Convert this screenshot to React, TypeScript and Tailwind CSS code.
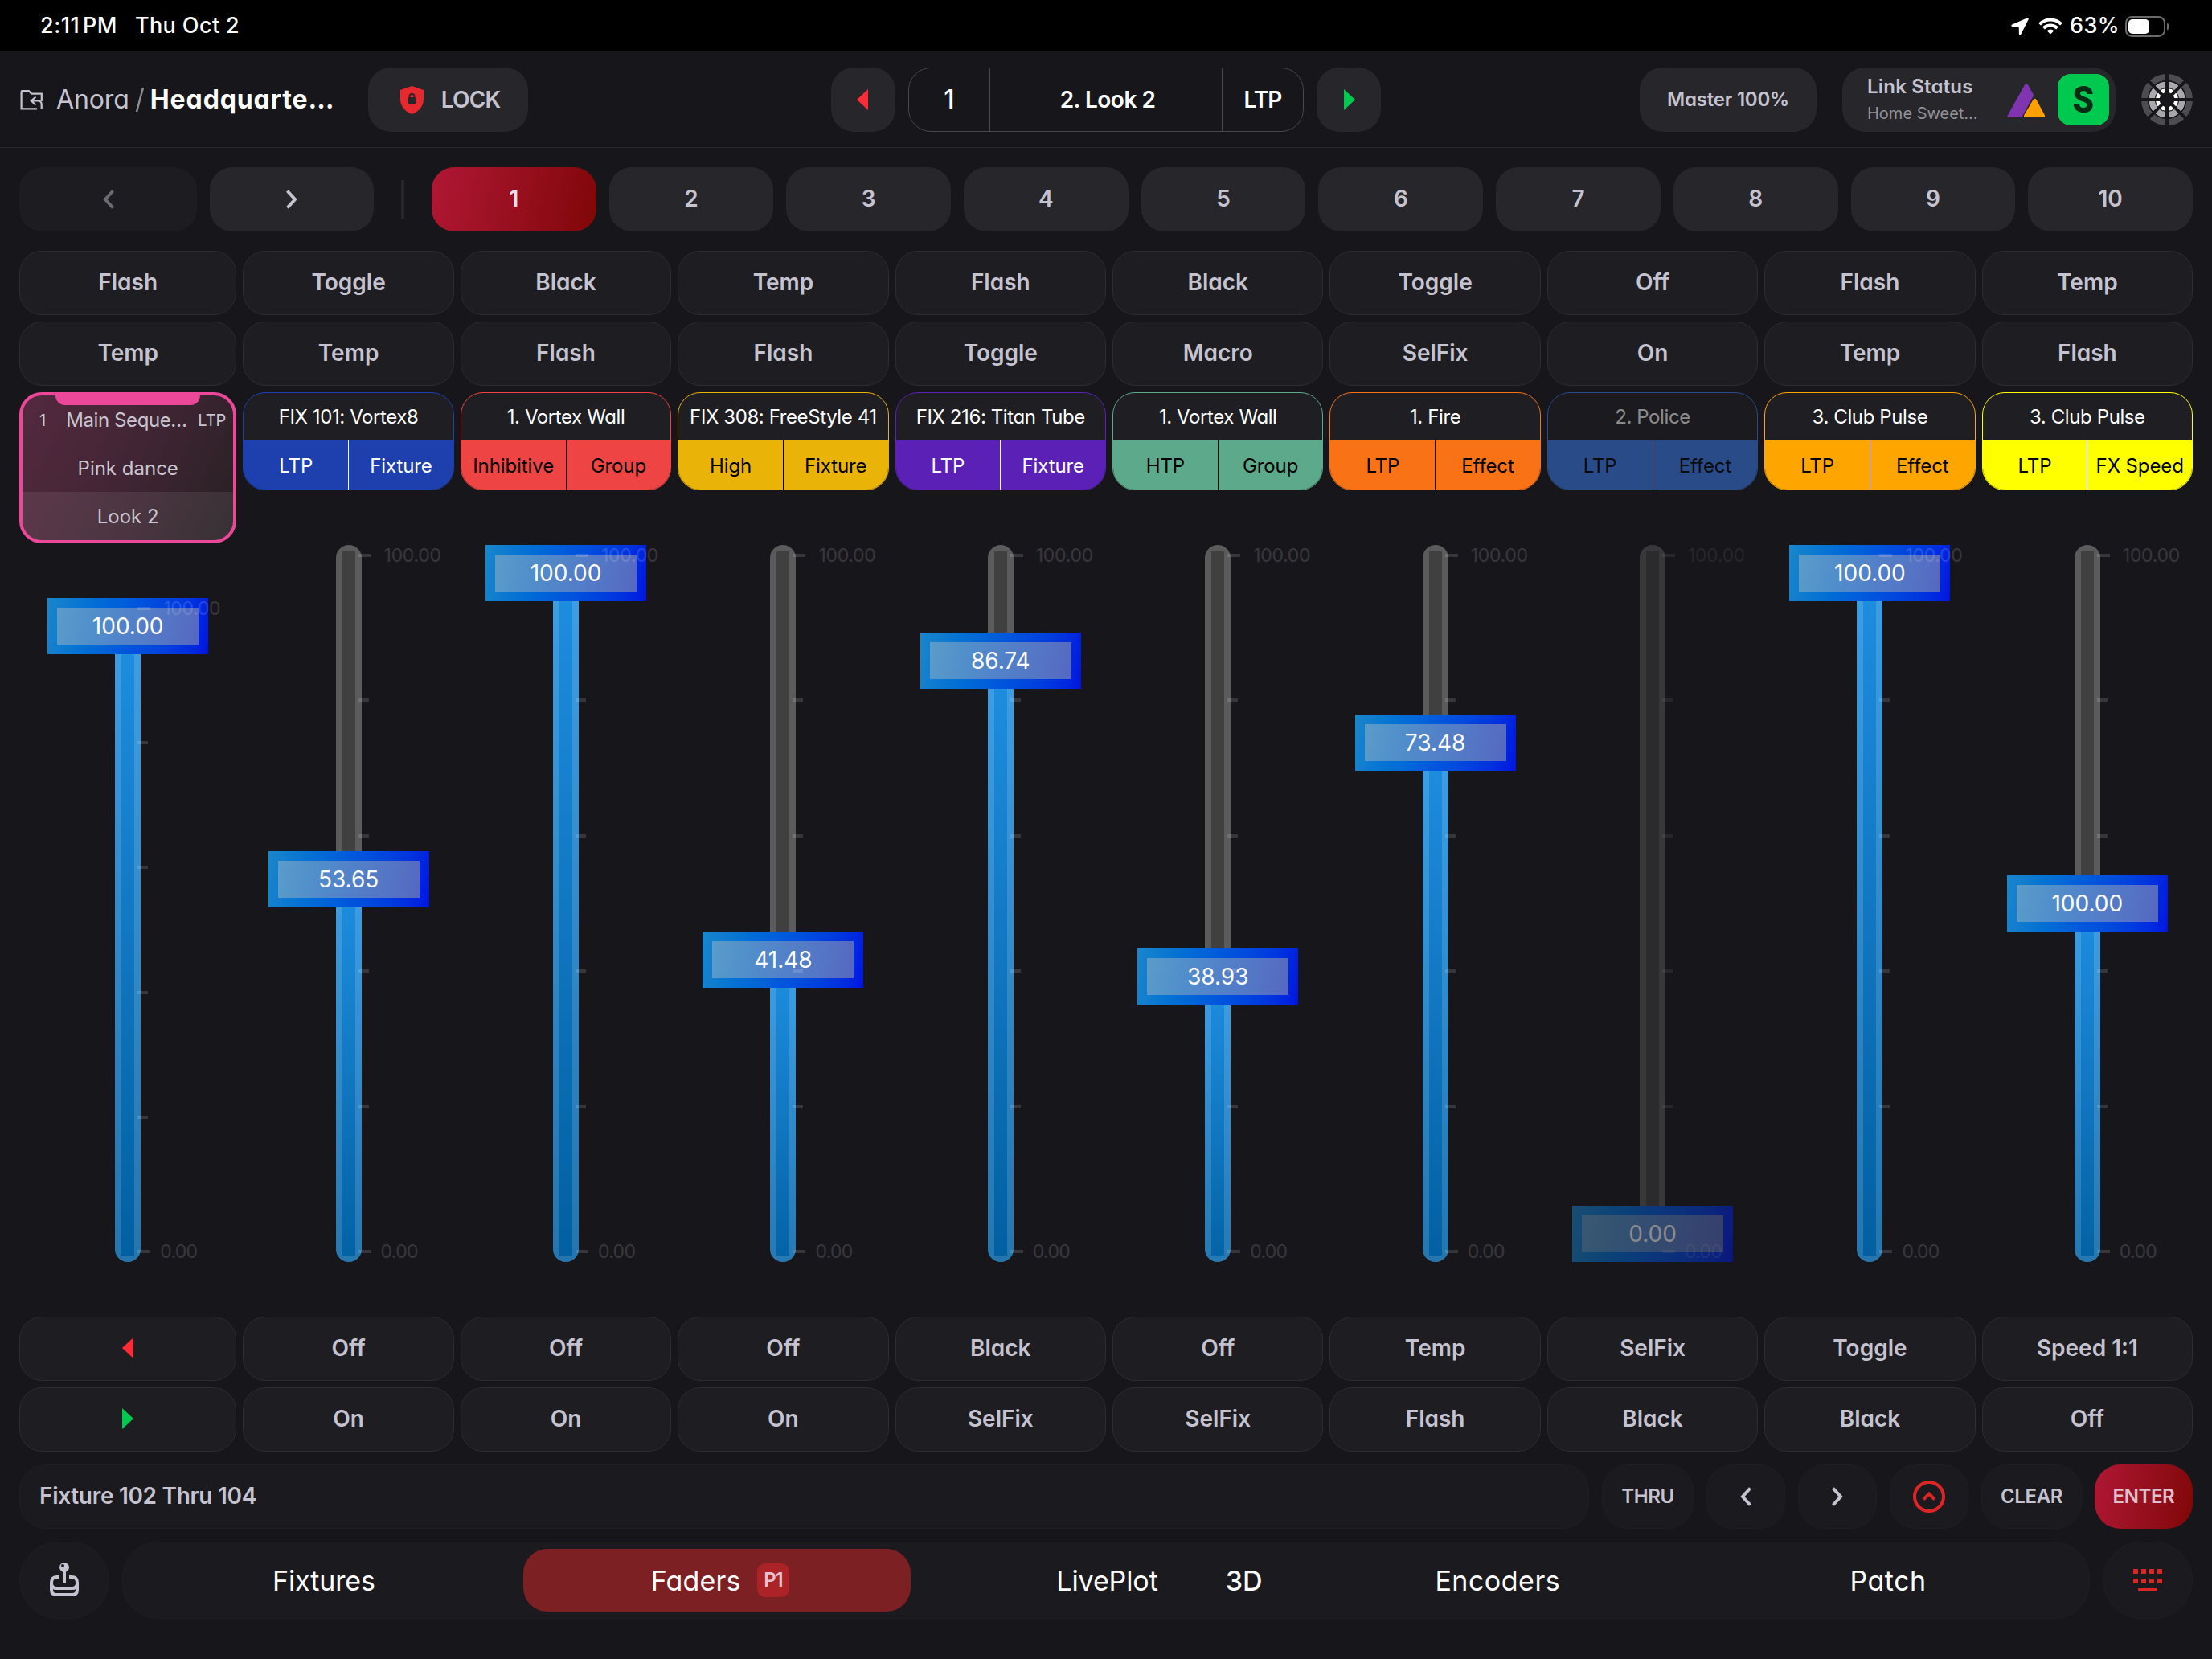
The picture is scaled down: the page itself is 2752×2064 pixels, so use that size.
import { ReactNode } from "react";
import clsx from "clsx";

interface Fader {
  top: string[];
  name: string;
  mode: string;
  kind: string;
  value: string;
  level: number;
  bottom: string[];
  border: string;
  fill: string;
  light?: boolean;
  disabled?: boolean;
}

const FADERS: Fader[] = [
  { top: ["Toggle", "Temp"], name: "FIX 101: Vortex8", mode: "LTP", kind: "Fixture", value: "53.65", level: 53.65, bottom: ["Off", "On"], border: "border-[#1e40af]", fill: "bg-[#1e40af]", light: true },
  { top: ["Black", "Flash"], name: "1. Vortex Wall", mode: "Inhibitive", kind: "Group", value: "100.00", level: 100, bottom: ["Off", "On"], border: "border-[#ef4444]", fill: "bg-[#ef4444]" },
  { top: ["Temp", "Flash"], name: "FIX 308: FreeStyle 41", mode: "High", kind: "Fixture", value: "41.48", level: 41.48, bottom: ["Off", "On"], border: "border-[#eab308]", fill: "bg-[#eab308]" },
  { top: ["Flash", "Toggle"], name: "FIX 216: Titan Tube", mode: "LTP", kind: "Fixture", value: "86.74", level: 86.74, bottom: ["Black", "SelFix"], border: "border-[#5b21b6]", fill: "bg-[#5b21b6]", light: true },
  { top: ["Black", "Macro"], name: "1. Vortex Wall", mode: "HTP", kind: "Group", value: "38.93", level: 38.93, bottom: ["Off", "SelFix"], border: "border-[#5ca98b]", fill: "bg-[#5ca98b]" },
  { top: ["Toggle", "SelFix"], name: "1. Fire", mode: "LTP", kind: "Effect", value: "73.48", level: 74.3, bottom: ["Temp", "Flash"], border: "border-[#f97316]", fill: "bg-[#f97316]" },
  { top: ["Off", "On"], name: "2. Police", mode: "LTP", kind: "Effect", value: "0.00", level: 0, bottom: ["SelFix", "Black"], border: "border-[#3b82f6]", fill: "bg-[#3b82f6]", disabled: true },
  { top: ["Flash", "Temp"], name: "3. Club Pulse", mode: "LTP", kind: "Effect", value: "100.00", level: 100, bottom: ["Toggle", "Black"], border: "border-[#ffa500]", fill: "bg-[#ffa500]" },
  { top: ["Temp", "Flash"], name: "3. Club Pulse", mode: "LTP", kind: "FX Speed", value: "100.00", level: 50, bottom: ["Speed 1:1", "Off"], border: "border-[#ffff00]", fill: "bg-[#ffff00]" },
];

const HANDLE_HEIGHT = 70;

function Triangle({ dir }: { dir: "left" | "right" }) {
  return (
    <svg width="14" height="26" viewBox="0 0 14 26">
      {dir === "left" ? (
        <path d="M14 0v26L0 13z" fill="#fb2c36" />
      ) : (
        <path d="M0 0v26l14-13z" fill="#00c950" />
      )}
    </svg>
  );
}

function Chevron({ dir }: { dir: "left" | "right" }) {
  return (
    <svg width="16" height="26" viewBox="0 0 16 26" fill="none" stroke="currentColor" strokeWidth="4">
      <path d={dir === "left" ? "M13.5 2.5 4 13l9.500 10.500" : "M2.500 2.500 12 13 2.500 23.500"} />
    </svg>
  );
}

function StatusBar() {
  return (
    <div className="flex h-16 items-center justify-between bg-black pt-px pr-[52px] pl-[50px] text-[27px] font-medium text-white">
      <div className="flex gap-[22px]">
        <span className="[word-spacing:-4px] tracking-[0.5px]">2:11 PM</span>
        <span className="tracking-[0.4px]">Thu Oct 2</span>
      </div>
      <div className="flex items-center">
        <svg width="22" height="22" viewBox="0 0 22 22" fill="#fff">
          <path d="M19.800.4 1.200 8.400c-1.300.6-1.100 2.400.3 2.500l8.200.3.2 8.800c0 1.500 1.900 1.800 2.500.5L21.600 2.200c.5-1.200-.6-2.300-1.800-1.800z" />
        </svg>
        <svg className="ml-3" width="30" height="21" viewBox="0 0 30 21" fill="none" stroke="#fff">
          <path d="M1.500 8.200a19 19 0 0 1 27 0" strokeWidth="4" />
          <path d="M6.400 13a12.200 12.200 0 0 1 17.200 0" strokeWidth="4" />
          <path d="M15 20.500 10.600 16.200a6.400 6.400 0 0 1 8.800 0z" fill="#fff" stroke="none" />
        </svg>
        <span className="ml-[9px] tracking-[0.4px]">63%</span>
        <svg className="ml-[7px]" width="56" height="26" viewBox="0 0 56 26">
          <rect x="1" y="1" width="48" height="24" rx="7.500" fill="none" stroke="#6b6b6b" strokeWidth="2" />
          <rect x="4" y="4" width="26" height="18" rx="5" fill="#fff" />
          <path d="M52 8.500c1.800.8 3 2.500 3 4.500s-1.200 3.700-3 4.500z" fill="#6b6b6b" />
        </svg>
      </div>
    </div>
  );
}

function Wheel() {
  return (
    <svg width="64" height="64" viewBox="-32 -32 64 64" fill="none">
      <circle r="28" stroke="#4d4c51" strokeWidth="8" />
      <circle r="18.800" stroke="#a9a9ab" strokeWidth="8" />
      <circle r="11.800" stroke="#fff" strokeWidth="5" />
      {[0, 45, 90, 135].map((deg) => (
        <path key={deg} d="M0-33V33" stroke="#17161b" strokeWidth="4" transform={`rotate(${deg})`} />
      ))}
      <circle r="14.700" stroke="#17161b" strokeWidth="1" />
      <circle r="23.400" stroke="#17161b" strokeWidth="1.400" />
    </svg>
  );
}

function Header() {
  return (
    <header className="flex h-[120px] items-center border-b border-[#27262b] px-6 pt-px">
      <div className="flex w-[1010px] items-center">
        <svg width="30" height="26" viewBox="0 0 30 26" fill="none" stroke="#c5c3d0" strokeWidth="2.200">
          <path d="M22 24.300H2.600V3.200q0-1 1-1h8.200l3.400 3.400h12.600V15" />
          <path d="M20.500 9.500 14.800 14.500l5.700 5M15.500 14.500h7.500q4.700 0 4.700 4.500v6" />
        </svg>
        <span className="ml-4 text-[32px] tracking-[-0.1px] text-[#c5c3d0]">Anora</span>
        <svg className="ml-[7px]" width="12" height="32" viewBox="0 0 12 32" stroke="#8e8d90" strokeWidth="2.500">
          <path d="M10 1 2 31" />
        </svg>
        <span className="ml-[7px] w-[230px] text-[32px] font-bold tracking-[0.9px] whitespace-nowrap text-white">Headquarte…</span>
        <button className="ml-[41px] flex h-20 w-[199px] items-center rounded-[28px] bg-[#27262b] pl-10 text-[28px] font-semibold text-[#c5c3d0]">
          <svg width="29" height="35" viewBox="0 0 29 35">
            <path d="M14.500 0 29 5v11.500C29 25 23 32 14.500 35 6 32 0 25 0 16.500V5z" fill="#e7292f" />
            <path d="M11.500 15v-2a3 3 0 0 1 6 0v2" fill="none" stroke="#27262b" strokeWidth="1.800" />
            <rect x="9.500" y="14" width="10" height="8.500" rx="1.500" fill="#27262b" />
          </svg>
          <span className="ml-[22px] tracking-[-0.8px]">LOCK</span>
        </button>
      </div>

      <div className="flex gap-4">
        <button className="flex size-20 items-center justify-center rounded-[28px] bg-[#27262b] pr-0.5">
          <Triangle dir="left" />
        </button>
        <div className="flex h-20 w-[492px] rounded-[28px] border border-[#48474d] text-[28px] font-semibold text-white">
          <span className="flex w-[101px] items-center justify-center border-r border-[#48474d] text-[32px] font-medium">1</span>
          <span className="flex flex-1 items-center justify-center pl-1 tracking-[-0.5px]">2. Look 2</span>
          <span className="flex w-[101px] items-center justify-center border-l border-[#48474d] tracking-[-1px]">LTP</span>
        </div>
        <button className="flex size-20 items-center justify-center rounded-[28px] bg-[#27262b] pl-0.5">
          <Triangle dir="right" />
        </button>
      </div>

      <div className="ml-auto flex items-center gap-8">
        <button className="h-20 w-[220px] rounded-[28px] bg-[#27262b] text-2xl font-semibold tracking-[-0.2px] text-[#c5c3d0]">Master 100%</button>
        <div className="flex h-20 w-[340px] items-center rounded-[28px] bg-[#27262b] pr-2 pl-[31px]">
          <div className="flex flex-col">
            <span className="text-2xl leading-[34px] font-semibold tracking-[0.2px] text-[#c5c3d0]">Link Status</span>
            <span className="text-xl leading-[32px] text-[#929198] [font-feature-settings:normal]">Home Sweet…</span>
          </div>
          <svg className="mt-0.5 ml-auto" width="47" height="42" viewBox="0 0 47 42">
            <path d="M22 1.500Q24 -1 26 1.500L32.500 13 33 15 19 40.500 17.500 42H.5L.3 40.500z" fill="#8035b0" />
            <path d="M32.500 20Q34.500 17.500 36.500 20L47 39.500V42H21V39.500z" fill="#ff9f00" />
          </svg>
          <div className="ml-4 flex size-16 items-center justify-center rounded-2xl bg-[#00c950] font-['Roboto',sans-serif] text-[47px] font-black text-[#032e15]">
            <span className="scale-x-90">S</span>
          </div>
        </div>
        <Wheel />
      </div>
    </header>
  );
}

function PageRow() {
  return (
    <div className="flex h-20 items-center text-[28px] font-semibold text-[#c5c3d0]">
      <button className="flex h-20 w-[221px] items-center justify-center rounded-[28px] bg-[#1d1c21] text-[#6b6a70]">
        <Chevron dir="left" />
      </button>
      <button className="ml-4 flex h-20 w-[204px] items-center justify-center rounded-[28px] bg-[#27262b]">
        <Chevron dir="right" />
      </button>
      <div className="mx-[34px] h-12 w-1 bg-[#27262b]" />
      <div className="grid h-20 flex-1 grid-cols-10 gap-4">
        {[1, 2, 3, 4, 5, 6, 7, 8, 9, 10].map((page) => (
          <button
            key={page}
            className={clsx(
              "rounded-[28px] pb-0.5",
              page === 1 ? "bg-linear-100 from-[#b01733] to-[#800706] text-[#f0dfe8]" : "bg-[#27262b]"
            )}
          >
            {page}
          </button>
        ))}
      </div>
    </div>
  );
}

function ActionButton({ children }: { children: ReactNode }) {
  return (
    <button className="flex h-20 w-full shrink-0 items-center justify-center rounded-[28px] border border-[#2d2c31] bg-[#1e1d22] pb-0.5 text-[28px] font-semibold text-[#c5c3d0]">
      {children}
    </button>
  );
}

function Slider({ value, level }: { value: string; level: number }) {
  return (
    <div className="relative flex w-full flex-1 justify-center">
      <div className="relative h-full w-8 overflow-hidden rounded-full bg-[#404040]">
        <div
          className="absolute bottom-0 w-full bg-linear-to-b from-[#1e8fe1] to-[#005c9c] bg-[length:100%_calc(100%+60px)] bg-no-repeat"
          style={{ height: `calc((100% - ${HANDLE_HEIGHT}px) * ${level / 100} + ${HANDLE_HEIGHT / 2}px)` }}
        />
        <div className="absolute inset-0 border-8 border-white/14" />
      </div>
      <div
        className="absolute flex h-[70px] w-[200px] bg-linear-100 from-[#1a86cb] via-[#0058dc] to-[#0012e0] p-3"
        style={{ top: `calc((100% - ${HANDLE_HEIGHT}px) * ${1 - level / 100})` }}
      >
        <div className="flex flex-1 items-center justify-center bg-linear-to-r from-[#c5c5c5]/40 to-[#a5a5a5]/52 text-[28px] text-white [font-feature-settings:normal]">
          {value}
        </div>
      </div>
      {/* scale */}
      <div className="absolute inset-y-0 left-1/2 ml-3 flex flex-col justify-between text-[23px] leading-[26px] tracking-[-0.3px] text-white/14 [font-feature-settings:normal]">
        <div className="flex items-center gap-4">
          <span className="h-1 w-4 bg-white/14" />
          100.00
        </div>
        <span className="h-1 w-[13px] bg-white/14" />
        <span className="h-1 w-[13px] bg-white/14" />
        <span className="h-1 w-[13px] bg-white/14" />
        <span className="h-1 w-[13px] bg-white/14" />
        <div className="flex items-center gap-3 tracking-[-0.7px]">
          <span className="h-1 w-4 bg-white/14" />
          0.00
        </div>
      </div>
    </div>
  );
}

function SequenceColumn() {
  return (
    <div className="flex w-[270.4px] flex-col gap-2">
      <ActionButton>Flash</ActionButton>
      <ActionButton>Temp</ActionButton>
      <div className="relative h-[188px] shrink-0 overflow-hidden rounded-[28px] border-4 border-[#ec4899] bg-linear-115 from-[#54293f] via-[#412534] to-[#272024] text-2xl text-[#c9c5d0] [font-feature-settings:normal]">
        <div className="absolute top-[-1px] left-[41px] h-[13px] w-[180px] rounded-b-xl bg-[#ec4899]" />
        <div className="flex h-[60px] items-center pt-0.5 pr-[9px] pl-[21px]">
          <span className="text-xl">1</span>
          <span className="ml-[25px] tracking-[-0.4px]">Main Seque…</span>
          <span className="ml-auto text-xl">LTP</span>
        </div>
        <div className="flex h-[60px] items-center justify-center pt-0.5">Pink dance</div>
        <div className="flex h-[60px] items-center justify-center bg-white/8 pt-0.5">Look 2</div>
      </div>
      <div className="mt-[60px] mb-[60px] flex flex-1">
        <Slider value="100.00" level={100} />
      </div>
      <ActionButton>
        <Triangle dir="left" />
      </ActionButton>
      <ActionButton>
        <Triangle dir="right" />
      </ActionButton>
    </div>
  );
}

function FaderColumn({ fader }: { fader: Fader }) {
  return (
    <div className="flex min-w-0 flex-1 flex-col gap-2">
      {fader.top.map((label) => (
        <ActionButton key={label}>{label}</ActionButton>
      ))}
      <div
        className={clsx(
          "flex h-[122px] shrink-0 flex-col overflow-hidden rounded-[28px] border bg-[#1f1e23] text-2xl",
          fader.border,
          fader.disabled && "opacity-50"
        )}
      >
        <div className="flex h-[59px] items-center justify-center tracking-[-0.4px] whitespace-nowrap text-white">{fader.name}</div>
        <div
          className={clsx(
            "flex flex-1 tracking-[-0.1px] whitespace-nowrap [font-feature-settings:normal]",
            fader.fill,
            fader.light ? "text-white" : "text-black"
          )}
        >
          <span className="flex flex-1 basis-0 items-center justify-center pt-0.5">{fader.mode}</span>
          <span className={clsx("w-px", fader.light ? "bg-white" : "bg-black")} />
          <span className="flex flex-1 basis-0 items-center justify-center pt-0.5">{fader.kind}</span>
        </div>
      </div>
      <div className={clsx("mt-[60px] mb-[60px] flex flex-1", fader.disabled && "opacity-50")}>
        <Slider value={fader.value} level={fader.level} />
      </div>
      {fader.bottom.map((label) => (
        <ActionButton key={label}>{label}</ActionButton>
      ))}
    </div>
  );
}

function CommandLine() {
  const key = "flex h-20 items-center justify-center rounded-[32px] border border-[#1f1e23] bg-[#1b1a1f]";
  return (
    <div className="flex gap-4 text-2xl font-semibold tracking-[-0.4px] text-[#c5c3d0]">
      <div className="flex h-20 flex-1 items-center rounded-[32px] border border-[#1f1e23] bg-[#1b1a1f] pl-6 text-[28px] tracking-[-0.3px]">
        Fixture 102 Thru 104
      </div>
      <button className={clsx(key, "w-[114px]")}>THRU</button>
      <button className={clsx(key, "w-[98px]")}>
        <Chevron dir="left" />
      </button>
      <button className={clsx(key, "w-[98px]")}>
        <Chevron dir="right" />
      </button>
      <button className={clsx(key, "w-[98px]")}>
        <svg width="40" height="40" viewBox="0 0 40 40" fill="none" stroke="#dc2626" strokeWidth="4">
          <circle cx="20" cy="20" r="18" />
          <path d="m13 23.500 7-7 7 7" />
        </svg>
      </button>
      <button className={clsx(key, "w-[125px]")}>CLEAR</button>
      <button className="h-20 w-[122px] rounded-[32px] bg-linear-100 from-[#b01733] to-[#800706] text-[#dfc0cd]">ENTER</button>
    </div>
  );
}

function TabBar() {
  return (
    <nav className="flex h-24 gap-4 text-[34px] tracking-[-0.1px] text-white">
      <button className="flex w-28 items-center justify-center rounded-[48px] border border-[#1f1e23] bg-[#1b1a1f]">
        <svg className="mt-[-2px]" width="36" height="42" viewBox="0 0 36 42" fill="none" stroke="#c5c3d0" strokeWidth="4">
          <path d="M18 8v18M12 18H9q-7 0-7 7v9q0 6 6 6h20q6 0 6-6v-9q0-7-7-7h-3" />
          <path d="M2 27q1 5 6 5h20q5 0 6-5" />
          <circle cx="18" cy="6" r="6" fill="#c5c3d0" stroke="none" />
          <circle cx="16" cy="4" r="2" fill="#1b1a1f" stroke="none" />
        </svg>
      </button>
      <div className="grid flex-1 grid-cols-5 gap-1 rounded-[44px] border border-[#1f1e23] bg-[#1b1a1f] py-2 pr-[9px] pl-3">
        <button className="pr-1.5">Fixtures</button>
        <button className="flex items-center justify-center gap-5 rounded-[30px] bg-[#7d2024] pl-2 tracking-[0.2px]">
          Faders
          <span className="flex h-[42px] w-10 items-center justify-center rounded-[10px] bg-[#ab2227] text-2xl font-semibold tracking-tighter text-[#e5c1cf]">P1</span>
        </button>
        <div className="grid grid-cols-[1fr_auto_1fr] items-center">
          <span />
          <span>LivePlot</span>
          <span className="pl-[84px] font-medium">3D</span>
        </div>
        <button className="tracking-[0.5px]">Encoders</button>
        <button className="tracking-[0.5px]">Patch</button>
      </div>
      <button className="flex w-28 items-center justify-center rounded-[48px] border border-[#1f1e23] bg-[#1b1a1f]">
        <svg width="36" height="28" viewBox="0 0 36 28" fill="#dc2626">
          {[0, 10, 20, 30].map((x) => (
            <path key={x} d={`M${x} 0h6v6h-6zM${x} 12h6v6h-6z`} />
          ))}
          <rect x="6" y="24" width="24" height="4" />
        </svg>
      </button>
    </nav>
  );
}

function App() {
  return (
    <div className="flex h-[2064px] w-[2752px] flex-col overflow-hidden bg-[#17161b] font-['Inter',sans-serif] [font-feature-settings:'cv11']">
      <StatusBar />
      <Header />
      <main className="flex flex-1 flex-col px-6 pt-6">
        <PageRow />
        <div className="mt-6 flex h-[1494px] gap-2">
          <SequenceColumn />
          {FADERS.map((fader, i) => (
            <FaderColumn key={i} fader={fader} />
          ))}
        </div>
        <div className="mt-4">
          <CommandLine />
        </div>
        <div className="mt-4">
          <TabBar />
        </div>
      </main>
    </div>
  );
}

export default App;
